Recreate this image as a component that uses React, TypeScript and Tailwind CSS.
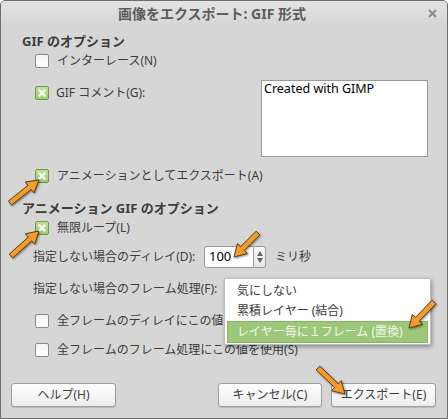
import React from 'react';

const FONT = { fontFamily: '"Noto Sans", "Noto Sans CJK JP", sans-serif' };

function CheckBox({ checked = false }: { checked?: boolean }) {
  if (checked) {
    return (
      <span className="flex h-[14px] w-[14px] shrink-0 items-center justify-center rounded-[2px] border border-[#6f9a4c] bg-gradient-to-b from-[#bde096] to-[#9ccb72]">
        <svg width="8" height="8" viewBox="0 0 8 8">
          <path d="M1.5 1.5 L6.5 6.5 M6.5 1.5 L1.5 6.5" stroke="#ffffff" strokeWidth="2.2" strokeLinecap="square" />
        </svg>
      </span>
    );
  }
  return (
    <span className="block h-[14px] w-[14px] shrink-0 rounded-[2px] border border-[#8c8c8c] bg-gradient-to-b from-[#f4f4f4] to-[#ffffff]" />
  );
}

function CheckRow({ label, checked, mt, clip }: { label: string; checked?: boolean; mt: string; clip?: boolean }) {
  return (
    <div className={`flex h-[18px] items-center pl-[34px] ${mt}`}>
      <CheckBox checked={checked} />
      <span className={`ml-[8px] whitespace-nowrap ${clip ? 'w-[166px] overflow-hidden' : ''}`}>{label}</span>
    </div>
  );
}

function Button({ label, w }: { label: string; w: string }) {
  return (
    <button className={`flex h-[24px] ${w} items-center justify-center rounded-[3px] border border-[#9e9e9e] bg-gradient-to-b from-[#ffffff] to-[#ececec] text-[12px] text-[#3c3c3c] shadow-[0_1px_1px_rgba(0,0,0,0.15)]`}>
      {label}
    </button>
  );
}

type Arrow = { x1: number; y1: number; x2: number; y2: number };

const arrows: Arrow[] = [
  { x1: 10, y1: 203, x2: 39, y2: 180 },
  { x1: 11, y1: 256, x2: 39, y2: 231 },
  { x1: 258, y1: 233, x2: 234, y2: 257 },
  { x1: 434, y1: 302, x2: 409, y2: 328 },
  { x1: 318, y1: 368, x2: 345, y2: 394 },
];

function arrowPoints(a: Arrow) {
  const dx = a.x2 - a.x1;
  const dy = a.y2 - a.y1;
  const L = Math.hypot(dx, dy);
  const ux = dx / L;
  const uy = dy / L;
  const nx = -uy;
  const ny = ux;
  const hl = 12;
  const hw = 7;
  const sw = 2.6;
  const pts: [number, number][] = [
    [0, -sw], [L - hl, -sw], [L - hl, -hw], [L, 0], [L - hl, hw], [L - hl, sw], [0, sw],
  ];
  return pts
    .map(([s, t]) => `${(a.x1 + ux * s + nx * t).toFixed(1)},${(a.y1 + uy * s + ny * t).toFixed(1)}`)
    .join(' ');
}

export default function App() {
  return (
    <div style={FONT} className="relative h-[419px] w-[448px] overflow-hidden rounded-t-[5px] border border-[#6e6e6e] bg-[#d6d6d6] text-[12px] text-[#3c3c3c]">
      {/* title bar */}
      <div className="relative flex h-[25px] items-center justify-center bg-gradient-to-b from-[#e3e3e3] to-[#d6d6d6] pr-[24px]">
        <span className="text-[14px] font-bold text-[#5c5c5c]">画像をエクスポート: GIF 形式</span>
        <svg className="absolute right-[10px] top-[8px]" width="9" height="9" viewBox="0 0 9 9">
          <path d="M1 1 L8 8 M8 1 L1 8" stroke="#8a8a8a" strokeWidth="2" />
        </svg>
      </div>

      <div className="flex flex-col">
        <div className="mt-[7px] flex h-[18px] items-center pl-[21px] text-[13px] font-bold">GIF のオプション</div>
        <CheckRow label="インターレース(N)" mt="mt-[1px]" />

        <div className="mt-[10px] flex h-[77px] items-start pr-[19px]">
          <div className="mt-[4px] flex h-[18px] items-center pl-[34px]">
            <CheckBox checked />
            <span className="ml-[7px]">GIF コメント(G):</span>
          </div>
          <div className="ml-auto h-[77px] w-[167px] border border-[#9a9a9a] bg-white px-[2px] text-[12.5px] leading-[15px] text-black">
            Created with GIMP
          </div>
        </div>

        <CheckRow label="アニメーションとしてエクスポート(A)" checked mt="mt-[10px]" />

        <div className="mt-[15px] flex h-[18px] items-center pl-[21px] text-[13px] font-bold">アニメーション GIF のオプション</div>
        <CheckRow label="無限ループ(L)" checked mt="mt-[1px]" />

        <div className="mt-[9px] flex h-[22px] items-center pl-[32px]">
          <span className="w-[171px] whitespace-nowrap">指定しない場合のディレイ(D):</span>
          <div className="flex h-[22px] items-stretch">
            <div className="flex w-[50px] items-center rounded-l-[3px] border border-[#9a9a9a] bg-white pl-[4px] text-[13px] text-black">100</div>
            <div className="flex w-[12px] flex-col items-center justify-center gap-[2px] rounded-r-[3px] border border-l-0 border-[#9a9a9a] bg-gradient-to-b from-[#fafafa] to-[#e6e6e6]">
              <span className="h-0 w-0 border-x-[3px] border-b-[5px] border-x-transparent border-b-[#666]" />
              <span className="h-0 w-0 border-x-[3px] border-t-[5px] border-x-transparent border-t-[#666]" />
            </div>
          </div>
          <span className="ml-[9px]">ミリ秒</span>
        </div>

        <div className="mt-[11px] flex h-[20px] items-center pl-[32px]">
          <span className="whitespace-nowrap">指定しない場合のフレーム処理(F):</span>
        </div>

        <CheckRow label="全フレームのディレイにこの値を使用(D)" mt="mt-[13px]" clip />
        <CheckRow label="全フレームのフレーム処理にこの値を使用(S)" mt="mt-[11px]" />

        <div className="mt-[24px] flex h-[24px] items-center pl-[10px] pr-[11px]">
          <Button label="ヘルプ(H)" w="w-[105px]" />
          <div className="ml-auto flex gap-[9px]">
            <Button label="キャンセル(C)" w="w-[104px]" />
            <Button label="エクスポート(E)" w="w-[105px]" />
          </div>
        </div>
      </div>

      {/* popup menu */}
      <div className="absolute left-[223px] top-[277px] flex w-[207px] flex-col border border-[#bdbdbd] bg-white px-[2px] pt-[1px] pb-[1px] shadow-[1px_2px_4px_rgba(0,0,0,0.35)]">
        <div className="flex h-[21px] items-center pl-[10px]">気にしない</div>
        <div className="flex h-[20px] items-center pl-[10px]">累積レイヤー (結合)</div>
        <div className="flex h-[22px] items-center border border-[#86b263] bg-[#9dc87a] pl-[9px] text-[#f4f8ef]">レイヤー毎に１フレーム (置換)</div>
      </div>

      {/* annotation arrows */}
      <svg className="pointer-events-none absolute left-[-1px] top-[-1px] drop-shadow-[1px_1px_1px_rgba(0,0,0,0.45)]" width="448" height="419" viewBox="0 0 448 419">
        {arrows.map((a, i) => (
          <polygon key={i} points={arrowPoints(a)} fill="#f39b2c" stroke="#5a3d12" strokeWidth="1" strokeLinejoin="round" />
        ))}
      </svg>
    </div>
  );
}
